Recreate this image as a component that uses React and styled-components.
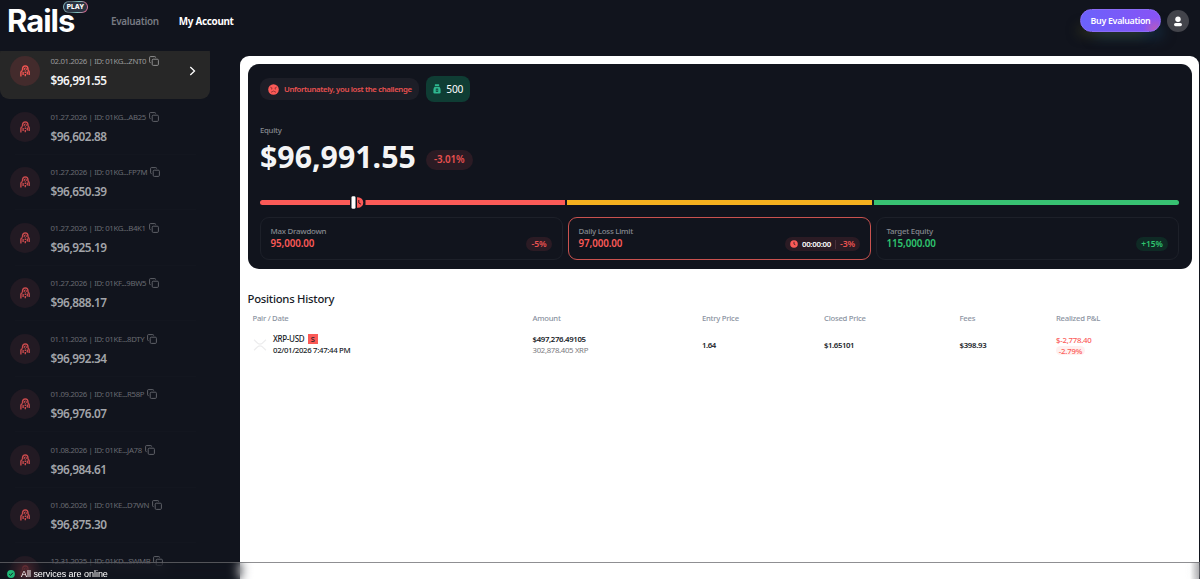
import React from "react";
import styled, { createGlobalStyle } from "styled-components";

const Global = createGlobalStyle`
  * { box-sizing: border-box; }
  body { margin: 0; background: #11141d; overflow: hidden; }
  svg { flex: none; }
`;

const Page = styled.div`
  height: 579px;
  display: flex;
  flex-direction: column;
  background: #11141d;
  color: #fff;
  font-family: "Noto Sans", "Open Sans", sans-serif;
  overflow: hidden;
`;

const Text = styled.span`
  display: block;
  white-space: nowrap;
  font-size: ${(p) => p.$size || 8}px;
  line-height: ${(p) => p.$line || 12}px;
  font-weight: ${(p) => p.$weight || 400};
  letter-spacing: ${(p) => p.$track || 0}px;
  color: ${(p) => p.$color || "inherit"};
`;

const Header = styled.header`
  height: 51px;
  flex: none;
  display: flex;
  align-items: flex-start;
  padding: 0 11px 0 7px;
`;

const Logo = styled.div`
  position: relative;
  width: 104px;
  height: 42px;
  padding-top: 10px;
  font-family: Inter, sans-serif;
`;

const PlayBadge = styled.div`
  position: absolute;
  left: 56px;
  top: 1px;
  width: 25px;
  height: 12px;
  padding: 1px;
  border-radius: 6px;
  background: linear-gradient(100deg, #8fc9cf, #4d5663 30%, #7cc4bd 60%, #c85a83 90%, #e4a0b7);
`;

const PlayLabel = styled.div`
  height: 10px;
  border-radius: 5px;
  background: #2b3441;
  text-align: center;
`;

const Nav = styled.nav`
  display: flex;
  gap: 20px;
  padding-top: 13px;
  flex: 1;
`;

const BuyButton = styled.button`
  width: 81px;
  height: 23px;
  margin: 9px 6px 0 0;
  padding: 1px 0 0;
  display: flex;
  align-items: center;
  justify-content: center;
  border: 1px solid #8b6cf6;
  border-radius: 12px;
  color: #fff;
  font-family: inherit;
  background: radial-gradient(circle at 94% 92%, #b45bc0 0, rgba(150, 80, 235, 0) 16%),
    linear-gradient(90deg, #6b62fb, #8852f5);
  box-shadow: -9px 10px 12px -7px rgba(75, 75, 30, 0.5), 8px 11px 13px -6px rgba(25, 75, 110, 0.5);
`;

const Avatar = styled.div`
  width: 22px;
  height: 22px;
  margin-top: 10px;
  border-radius: 50%;
  background: #43444b;
  display: grid;
  place-items: center;
`;

const Body = styled.div`
  flex: 1;
  min-height: 0;
  display: flex;
`;

const Sidebar = styled.aside`
  width: 240px;
  flex: none;
  overflow: hidden;
`;

const AccountList = styled.div`
  width: 209.5px;
  margin-top: -7.5px;
`;

const Account = styled.div`
  height: 55.5px;
  display: flex;
  align-items: center;
  padding: 0 14px 0 10px;
  border-radius: 9px;
  background: ${(p) => (p.$active ? "#272727" : "transparent")};
  position: relative;
`;

const Divider = styled.div`
  position: absolute;
  left: 15px;
  right: 14px;
  bottom: 0;
  height: 1px;
  background: #13161f;
`;

const AccountIcon = styled.div`
  width: 30px;
  height: 30px;
  margin-right: 10.5px;
  border-radius: 50%;
  display: grid;
  place-items: center;
  background: ${(p) => (p.$active ? "#432b2c" : "#221a23")};
`;

const AccountInfo = styled.div`
  flex: 1;
  min-height: 32px;
  display: flex;
  flex-direction: column;
  gap: 6px;
`;

const Meta = styled.div`
  display: flex;
  align-items: center;
  gap: 3px;
  height: 12px;
  color: ${(p) => (p.$active ? "#9a9a9b" : "#686a71")};
`;

const Main = styled.main`
  width: 959px;
  margin-top: 5px;
  padding: 8px 7.5px;
  border-radius: 9px 9px 0 0;
  background: #fff;
  color: #171b27;
`;

const Summary = styled.section`
  height: 205px;
  padding: 12px 12.5px 0;
  border-radius: 11px;
  background: #11141d;
  color: #fff;
`;

const Row = styled.div`
  display: flex;
  align-items: center;
  gap: ${(p) => p.$gap || 0}px;
`;

const LostPill = styled.div`
  width: 159px;
  height: 22px;
  padding-left: 8px;
  display: flex;
  align-items: center;
  gap: 5px;
  border-radius: 9px;
  background: #1d1e27;
`;

const PointsPill = styled.div`
  width: 44px;
  height: 26px;
  display: flex;
  align-items: center;
  justify-content: center;
  gap: 5.5px;
  border-radius: 8px;
  background: #0f3d34;
`;

const EquityBlock = styled.div`
  margin-top: 22px;
`;

const EquityRow = styled.div`
  display: flex;
  align-items: center;
  height: 40px;
`;

const EquityValue = styled.div`
  width: 166px;
  padding-top: 1px;
`;

const ChangeSlot = styled.div`
  padding-top: 7px;
`;

const Pill = styled.div`
  height: ${(p) => p.$h || 14}px;
  width: ${(p) => p.$w}px;
  display: flex;
  align-items: center;
  justify-content: center;
  gap: 4px;
  border-radius: 10px;
  background: ${(p) => (p.$good ? "#0f2a25" : "#2b1b24")};
`;

const Track = styled.div`
  position: relative;
  margin-top: 24px;
  height: 5px;
  display: grid;
  grid-template-columns: repeat(3, 1fr);
  gap: 1.5px;
`;

const Segment = styled.div`
  background: ${(p) => p.$color};
  &:first-child { border-radius: 3px 0 0 3px; }
  &:nth-child(3) { border-radius: 0 3px 3px 0; }
`;

const Marker = styled.svg`
  position: absolute;
  left: 90px;
  top: -4px;
`;

const Limits = styled.div`
  margin-top: 12px;
  display: grid;
  grid-template-columns: repeat(3, 1fr);
  gap: 5px;
`;

const LimitCard = styled.div`
  height: 42.5px;
  display: flex;
  justify-content: space-between;
  align-items: flex-start;
  padding: 7px 10px 0 9.5px;
  border: 1px solid ${(p) => (p.$alert ? "#c9524f" : "#1d2029")};
  border-radius: 9px;
`;

const LimitPill = styled.div`
  padding-top: 12px;
`;

const Separator = styled.div`
  width: 1px;
  height: 9px;
  background: #49303a;
`;

const History = styled.section`
  margin-top: 22px;
`;

const Columns = styled.div`
  display: grid;
  grid-template-columns: 280px 169.5px 122px 135.5px 96.5px 1fr;
  align-items: center;
  padding-left: 5px;
  height: ${(p) => p.$h}px;
`;

const Pair = styled.div`
  display: flex;
  align-items: center;
  gap: 6.5px;
`;

const SideTag = styled.div`
  width: 10px;
  height: 10px;
  background: #fb5a57;
  text-align: center;
`;

const LossTag = styled.div`
  width: 29px;
  height: 9px;
  display: flex;
  align-items: center;
  justify-content: center;
  border-radius: 5px;
  background: #fff0ef;
`;

const StatusBar = styled.footer`
  position: fixed;
  left: 0;
  right: 0;
  bottom: 0;
  height: 17px;
  padding: 6px 0 0 7px;
  display: flex;
  align-items: center;
  gap: 6px;
  border-top: 1px solid rgba(105, 105, 110, 0.75);
  background: linear-gradient(90deg, transparent 1190px, rgba(60, 60, 66, 0.4) 1200px);
  backdrop-filter: blur(6px);
  font-family: "Liberation Sans", Arial, sans-serif;
`;

const CopyIcon = () => (
  <svg width="10" height="10" viewBox="0 0 10 10" fill="none" stroke="currentColor" strokeWidth="0.9">
    <rect x="3.2" y="3.2" width="6.2" height="6.2" rx="1.1" />
    <path d="M1.7 6.6H1.4Q.6 6.6.6 5.8V1.4Q.6.6 1.4.6H5.8Q6.6.6 6.6 1.4V1.7" />
  </svg>
);

const MedalIcon = ({ active }) => (
  <svg width="10" height="12" viewBox="0 0 10 12" fill="none" stroke={active ? "#f25552" : "#c94a4d"} strokeWidth="1.4">
    <path d="M2.5 5.6V4Q2.6 1 5.3 .9Q8 1 8 4V5.4" />
    <path d="M5.3 2.7L6.7 4.1L5.3 5.5L3.9 4.1Z" strokeWidth="1" />
    <path d="M.9 11.6V7.2Q1 6 2.5 5.7M3.1 6.9V10M5.3 6.5V8M5.3 9V11.2M7.3 6.4V9.4M9.2 10V7Q9.1 5.8 8 5.4" />
  </svg>
);

const Clock = ({ size = 8 }) => (
  <svg width={size} height={size} viewBox="0 0 8 8">
    <circle cx="4" cy="4" r="3.8" fill="#fb5a57" />
    <path d="M4 1.8V4.1L5.4 4.8" fill="none" stroke="#2b1b24" strokeWidth="0.8" />
  </svg>
);

const accounts = [
  ["02.01.2026 | ID: 01KG...ZNT0", "$96,991.55"],
  ["01.27.2026 | ID: 01KG...AB25", "$96,602.88"],
  ["01.27.2026 | ID: 01KG...FP7M", "$96,650.39"],
  ["01.27.2026 | ID: 01KG...B4K1", "$96,925.19"],
  ["01.27.2026 | ID: 01KF...9BW5", "$96,888.17"],
  ["01.11.2026 | ID: 01KE...8DTY", "$96,992.34"],
  ["01.09.2026 | ID: 01KE...R58P", "$96,976.07"],
  ["01.08.2026 | ID: 01KE...JA78", "$96,984.61"],
  ["01.06.2026 | ID: 01KE...D7WN", "$96,875.30"],
  ["12.31.2025 | ID: 01KD...SWMB", null],
];

const RED = "#fb5a57";
const GREEN = "#2fc46f";

const Limit = ({ label, value, color, alert, children }) => (
  <LimitCard $alert={alert}>
    <div>
      <Text $size={7.9} $weight={500} $color="#85888f" $line={12} $track={-0.25}>{label}</Text>
      <Text $size={9.8} $weight={600} $color={color} $line={14} $track={-0.1}>{value}</Text>
    </div>
    <LimitPill>{children}</LimitPill>
  </LimitCard>
);

export default function App() {
  return (
    <Page>
      <Global />
      <Header>
        <Logo>
          <Text $size={31} $line={22} $weight={700} $track={-1}>Rails</Text>
          <PlayBadge>
            <PlayLabel><Text $size={6.5} $line={10} $weight={800}>PLAY</Text></PlayLabel>
          </PlayBadge>
        </Logo>
        <Nav>
          <Text $size={9.9} $line={17} $weight={600} $color="#777a82" $track={-0.3}>Evaluation</Text>
          <Text $size={9.9} $line={17} $weight={700} $track={-0.3}>My Account</Text>
        </Nav>
        <BuyButton><Text $size={8.9} $weight={600} $track={-0.32}>Buy Evaluation</Text></BuyButton>
        <Avatar>
          <svg width="10" height="11" viewBox="0 0 10 11" fill="#fff">
            <circle cx="5" cy="3.2" r="2.7" />
            <rect x="1" y="6.9" width="8" height="3.3" rx="1.65" />
          </svg>
        </Avatar>
      </Header>
      <Body>
        <Sidebar>
          <AccountList>
            {accounts.map(([meta, value], i) => (
              <Account key={meta} $active={i === 0}>
                <AccountIcon $active={i === 0}><MedalIcon active={i === 0} /></AccountIcon>
                <AccountInfo>
                  <Meta $active={i === 0}>
                    <Text $size={7.8} $track={-0.35}>{meta}</Text>
                    <CopyIcon />
                  </Meta>
                  {value && (
                    <Text $size={11.8} $line={14} $weight={600} $track={-0.45} $color={i === 0 ? "#f5f5f5" : "#a2a4a9"}>{value}</Text>
                  )}
                </AccountInfo>
                {i === 0 ? (
                  <svg width="7" height="10" viewBox="0 0 7 10" fill="none" stroke="#fff" strokeWidth="1.3">
                    <path d="M1.3 1L5.5 5L1.3 9" />
                  </svg>
                ) : <Divider />}
              </Account>
            ))}
          </AccountList>
        </Sidebar>
        <Main>
          <Summary>
            <Row $gap={7}>
              <LostPill>
                <svg width="11" height="11" viewBox="0 0 11 11">
                  <circle cx="5.5" cy="5.5" r="5.3" fill={RED} />
                  <path d="M2.3 3.2L4.4 4.2M8.7 3.2L6.6 4.2M3 8.3Q5.5 5.8 8 8.3" fill="none" stroke="#8a2d30" strokeWidth="0.8" />
                  <circle cx="3.6" cy="4.8" r="0.6" fill="#8a2d30" />
                  <circle cx="7.4" cy="4.8" r="0.6" fill="#8a2d30" />
                </svg>
                <Text $size={7.8} $weight={600} $color="#e95150" $track={-0.37}>Unfortunately, you lost the challenge</Text>
              </LostPill>
              <PointsPill>
                <svg width="8" height="10" viewBox="0 0 8 10" fill="#2fb890">
                  <rect x="1.8" y="0.3" width="4.4" height="1.7" rx="0.4" />
                  <path d="M1.6 2.8H6.4Q7.6 4.2 7.6 6V8.2Q7.6 9.5 6.3 9.5H1.7Q.4 9.5.4 8.2V6Q.4 4.2 1.6 2.8Z" />
                  <path d="M2.8 4.6H5.2V7.8H2.8Z" fill="#0f3d34" />
                  <path d="M3.5 5.5H4.5V7H3.5Z" />
                </svg>
                <Text $size={10.2} $weight={400} $track={-0.2}>500</Text>
              </PointsPill>
            </Row>
            <EquityBlock>
              <Text $size={7.8} $weight={500} $color="#85888f" $track={-0.3}>Equity</Text>
              <EquityRow>
                <EquityValue><Text $size={30.3} $line={40} $weight={700} $color="#f4f4f5">$96,991.55</Text></EquityValue>
                <ChangeSlot>
                  <Pill $w={46.5} $h={20}><Text $size={9.8} $weight={600} $color="#e95150" $track={-0.1}>-3.01%</Text></Pill>
                </ChangeSlot>
              </EquityRow>
            </EquityBlock>
            <Track>
              <Segment $color={RED} />
              <Segment $color="#f5b11f" />
              <Segment $color="#38c172" />
              <Marker width="16" height="13" viewBox="0 0 16 13">
                <rect x="0" y="3" width="15.5" height="7" fill="#11141d" />
                <path d="M7 1.2H8A5.3 5.3 0 0 1 8 11.8H7Z" fill={RED} />
                <path d="M8.8 4V7L11 8.2" fill="none" stroke="#43181d" strokeWidth="1" />
                <rect x="1.5" y="0.3" width="4" height="12.4" rx="1.3" fill="#fff" />
              </Marker>
            </Track>
            <Limits>
              <Limit label="Max Drawdown" value="95,000.00" color={RED}>
                <Pill $w={26}><Text $size={8.7} $weight={600} $color="#e95150" $track={-0.1}>-5%</Text></Pill>
              </Limit>
              <Limit label="Daily Loss Limit" value="97,000.00" color={RED} alert>
                <Pill $w={75}>
                  <Clock />
                  <Text $size={7.9} $weight={600} $track={-0.3}>00:00:00</Text>
                  <Separator />
                  <Text $size={8.7} $weight={600} $color="#e95150" $track={-0.1}>-3%</Text>
                </Pill>
              </Limit>
              <Limit label="Target Equity" value="115,000.00" color={GREEN}>
                <Pill $w={32} $good><Text $size={8.4} $weight={600} $color={GREEN} $track={-0.1}>+15%</Text></Pill>
              </Limit>
            </Limits>
          </Summary>
          <History>
            <Text $size={11.3} $line={16} $weight={500} $track={-0.25}>Positions History</Text>
            <Columns $h={21.5}>
              {["Pair / Date", "Amount", "Entry Price", "Closed Price", "Fees", "Realized P&L"].map((t) => (
                <Text key={t} $size={7.7} $weight={500} $color="#8b93a1" $track={-0.25}>{t}</Text>
              ))}
            </Columns>
            <Columns $h={32}>
              <Pair>
                <svg width="14" height="12" viewBox="0 0 14 12" fill="none" stroke="#ededee" strokeWidth="1.2">
                  <path d="M1 .8L4.7 4.3Q7 6.1 9.3 4.3L13 .8M1 11.2L4.7 7.7Q7 5.9 9.3 7.7L13 11.2" />
                </svg>
                <div>
                  <Row $gap={3.5}>
                    <Text $size={8} $weight={500} $track={-0.32}>XRP-USD</Text>
                    <SideTag><Text $size={7.4} $line={10} $weight={500}>S</Text></SideTag>
                  </Row>
                  <Text $size={7.8} $weight={500} $line={11} $track={-0.33}>02/01/2026 7:47:44 PM</Text>
                </div>
              </Pair>
              <div>
                <Text $size={7.8} $weight={600} $track={-0.33}>$497,276.49105</Text>
                <Text $size={7.8} $line={11} $track={-0.33} $color="#7b7b80">302,878.405 XRP</Text>
              </div>
              <Text $size={7.8} $weight={600} $track={-0.4}>1.64</Text>
              <Text $size={7.8} $weight={600} $track={-0.4}>$1.65101</Text>
              <Text $size={7.8} $weight={600} $track={-0.3}>$398.93</Text>
              <div>
                <Text $size={7.8} $weight={500} $color={RED} $track={-0.25}>$-2,778.40</Text>
                <LossTag><Text $size={7.8} $weight={500} $line={10} $color={RED} $track={-0.2}>-2.79%</Text></LossTag>
              </div>
            </Columns>
          </History>
        </Main>
      </Body>
      <StatusBar>
        <svg width="8" height="8" viewBox="0 0 8 8">
          <circle cx="4" cy="4" r="3.9" fill="#1fb877" />
          <path d="M2.2 4.1L3.5 5.4L5.9 2.8" fill="none" stroke="#11141d" strokeWidth="0.9" />
        </svg>
        <Text $size={9} $line={11} $track={-0.03}>All services are online</Text>
      </StatusBar>
    </Page>
  );
}
